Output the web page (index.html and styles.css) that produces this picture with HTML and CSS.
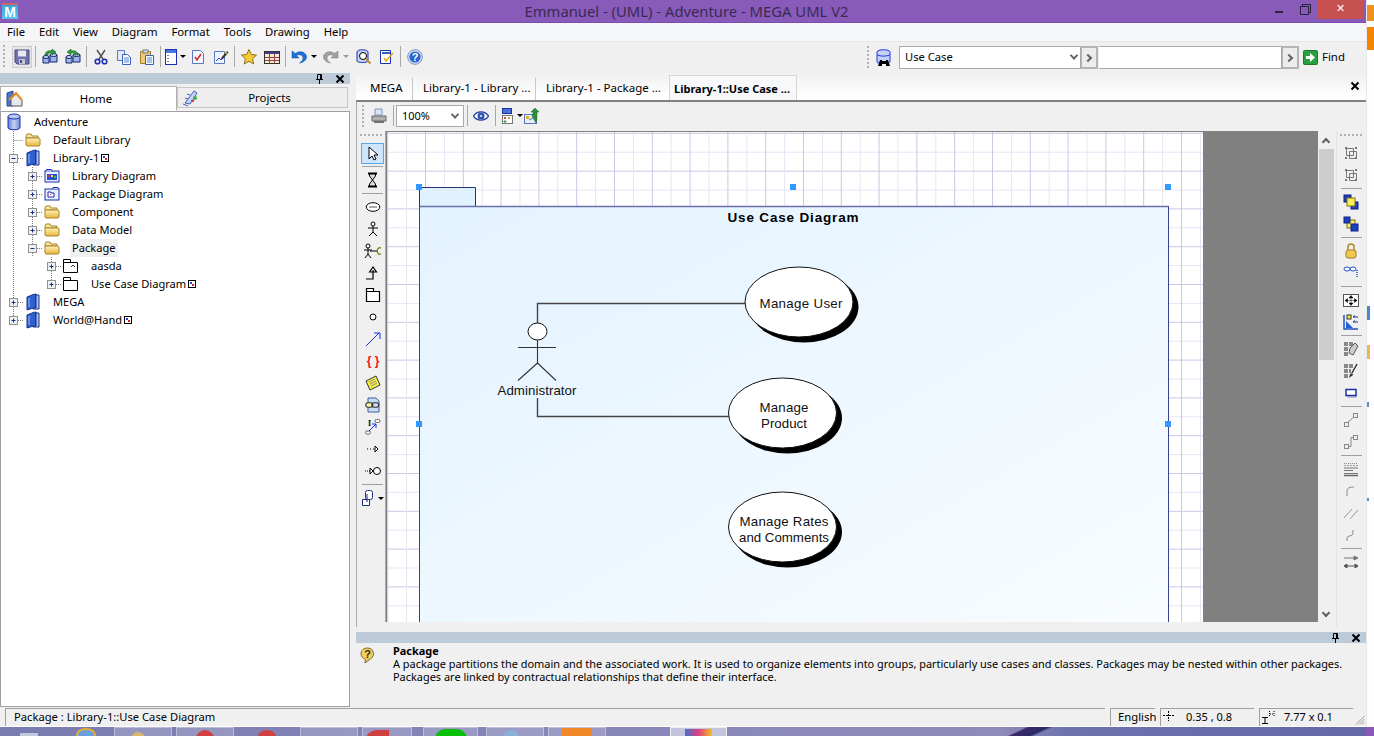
FILE: index.html
```html
<!DOCTYPE html>
<html lang="en">
<head>
<meta charset="utf-8">
<title>Emmanuel - (UML) - Adventure - MEGA UML V2</title>
<link rel="stylesheet" href="styles.css">
</head>
<body>
<svg class="defs" width="0" height="0" aria-hidden="true">
  <defs>
    <linearGradient id="cyl" x1="0" x2="1" y1="0" y2="0"><stop offset="0" stop-color="#5f7fd8"/><stop offset=".5" stop-color="#c4d2f2"/><stop offset="1" stop-color="#6f8cdc"/></linearGradient>
    <linearGradient id="fold" x1="0" x2="0" y1="0" y2="1"><stop offset="0" stop-color="#fff3b8"/><stop offset="1" stop-color="#e8b53c"/></linearGradient>
    <linearGradient id="pkg" x1="0" y1="0" x2="1" y2="1"><stop offset="0" stop-color="#e3f3ff"/><stop offset="1" stop-color="#f8fcff"/></linearGradient>
    <pattern id="grid" x="9.2" y="19.4" width="37.8" height="37.8" patternUnits="userSpaceOnUse">
      <rect x="0" y="0" width="37.8" height="1" fill="#c9c6e6" shape-rendering="crispEdges"/>
      <rect x="0" y="18.9" width="37.8" height="1" fill="#e6e4f5" shape-rendering="crispEdges"/>
      <rect x="0" y="0" width="1" height="37.8" fill="#c9c6e6" shape-rendering="crispEdges"/>
      <rect x="18.9" y="0" width="1" height="37.8" fill="#e6e4f5" shape-rendering="crispEdges"/>
    </pattern>
    <symbol id="db" viewBox="0 0 16 18"><path d="M2 3.500v11c0 3 12 3 12 0v-11z" fill="url(#cyl)" stroke="#1c2fb0"/><ellipse cx="8" cy="3.500" rx="6" ry="2.500" fill="#b7c8f0" stroke="#1c2fb0"/></symbol>
    <symbol id="folder" viewBox="0 0 16 16"><path d="M1 4l1-2h4l1 2h6v2H1z" fill="#f8e9a0" stroke="#a8842c"/><path d="M1 13V6h13l1 1v6l-1 1H2z" fill="url(#fold)" stroke="#a8842c"/></symbol>
    <symbol id="book" viewBox="0 0 16 18"><path d="M2 4c3-1 6-3 9-3v14c-3 0-6 1-9 2z" fill="#2f5fd0" stroke="#15308c"/><path d="M11 2h3v14H8c1-1 2-1 3-1z" fill="#a8c0f0" stroke="#15308c"/><path d="M4 5v9" stroke="#9fc0ff"/></symbol>
    <symbol id="libd" viewBox="0 0 16 16"><rect x="1" y="3" width="14" height="11" fill="#e8f0ff" stroke="#1c2fb0"/><path d="M1.500 3.500l1-2h5l1 2" fill="#b8c8f0" stroke="#1c2fb0"/><rect x="3" y="6" width="10" height="6" fill="#2a50d0"/><rect x="4" y="7" width="2" height="2" fill="#f03030"/><rect x="7" y="7" width="2" height="2" fill="#ffe040"/><rect x="10" y="8" width="2" height="2" fill="#40c040"/></symbol>
    <symbol id="pkgd" viewBox="0 0 16 16"><rect x="1" y="3" width="14" height="11" fill="#e8f0ff" stroke="#1c2fb0"/><path d="M9 3V1.500h5l1 1.500" fill="#b8c8f0" stroke="#1c2fb0"/><path d="M4 6h3v1h3v4H4z" fill="#fff" stroke="#1c2fb0"/><rect x="6" y="8" width="1" height="1" fill="#f03030"/></symbol>
    <symbol id="pkgo" viewBox="0 0 16 16"><path d="M.5 14.500v-10h14v10zM.5 4.500v-3h7v3" fill="#fff" stroke="#000"/></symbol>
    <symbol id="pkga" viewBox="0 0 16 16"><path d="M.5 14.500v-10h14v10zM.5 4.500v-3h7v3" fill="#fff" stroke="#000"/><path d="M8 9l2-2 2 2" fill="none" stroke="#333"/></symbol>
    <symbol id="cnplus" viewBox="0 0 19 18"><path d="M9.500 0v5M14 9.500h5" stroke="#808080" stroke-dasharray="1 1" fill="none"/><rect x="5.500" y="5.500" width="8" height="8" fill="#eef1f6" stroke="#909090"/><path d="M7.500 9.500h4M9.500 7.500v4" stroke="#1c2f80"/></symbol>
    <symbol id="cnplusc" viewBox="0 0 19 18"><path d="M9.500 0v18M14 9.500h5" stroke="#808080" stroke-dasharray="1 1" fill="none"/><rect x="5.500" y="5.500" width="8" height="8" fill="#eef1f6" stroke="#909090"/><path d="M7.500 9.500h4M9.500 7.500v4" stroke="#1c2f80"/></symbol>
    <symbol id="cnminus" viewBox="0 0 19 18"><path d="M9.500 0v18M14 9.500h5" stroke="#808080" stroke-dasharray="1 1" fill="none"/><rect x="5.500" y="5.500" width="8" height="8" fill="#eef1f6" stroke="#909090"/><path d="M7.500 9.500h4" stroke="#1c2f80"/></symbol>
    <symbol id="cnt" viewBox="0 0 19 18"><path d="M9.500 0v18M9.500 9.500H19" stroke="#808080" stroke-dasharray="1 1" fill="none"/></symbol>
    <symbol id="cnv" viewBox="0 0 19 18"><path d="M9.500 0v18" stroke="#808080" stroke-dasharray="1 1" fill="none"/></symbol>
    <symbol id="badge" viewBox="0 0 8 8"><rect x=".5" y=".5" width="7" height="7" fill="#fff" stroke="#000"/><rect x="2" y="2" width="2" height="2" fill="#2040e0"/><rect x="4" y="4" width="2" height="2" fill="#e02020"/></symbol>

    <symbol id="save" viewBox="0 0 16 16"><path d="M1 1h14v14H3l-2-2z" fill="#6f70ac" stroke="#4a4a80"/><rect x="4" y="1.500" width="8" height="6" fill="#e8e8f0"/><rect x="5" y="10" width="6" height="5" fill="#c4c4d8"/><rect x="6" y="11" width="2" height="3" fill="#4a4a80"/></symbol>
    <symbol id="dbdown" viewBox="0 0 16 16"><path d="M1 8h6v6H1zM8 6h7v7H8z" fill="#9db5ea" stroke="#12246c"/><ellipse cx="4" cy="8" rx="3" ry="1.500" fill="#c8d6f6" stroke="#12246c"/><ellipse cx="11.500" cy="6" rx="3.500" ry="1.500" fill="#c8d6f6" stroke="#12246c"/><path d="M3 6c0-3 3-5 7-4V0l4 3-4 3V4C7 3.500 6 4.500 6 6z" fill="#2f9a3c" stroke="#186a22" stroke-width=".6"/></symbol>
    <symbol id="dbup" viewBox="0 0 16 16"><path d="M1 8h6v6H1zM8 6h7v7H8z" fill="#9db5ea" stroke="#12246c"/><ellipse cx="4" cy="8" rx="3" ry="1.500" fill="#c8d6f6" stroke="#12246c"/><ellipse cx="11.500" cy="6" rx="3.500" ry="1.500" fill="#c8d6f6" stroke="#12246c"/><path d="M13 6c0-3-3-5-7-4V0L2 3l4 3V4c3-.5 4 .5 4 2z" fill="#2f9a3c" stroke="#186a22" stroke-width=".6"/></symbol>
    <symbol id="cut" viewBox="0 0 16 16"><path d="M4 1l6 9M12 1L6 10" stroke="#555" stroke-width="1.500"/><circle cx="4.500" cy="12.500" r="2.300" fill="none" stroke="#1c2fb0" stroke-width="1.600"/><circle cx="11.500" cy="12.500" r="2.300" fill="none" stroke="#1c2fb0" stroke-width="1.600"/></symbol>
    <symbol id="copy" viewBox="0 0 16 16"><path d="M1.500 1.500h7v10h-7z" fill="#e4ecfa" stroke="#5a78c0"/><path d="M6.500 5.500h5l3 3v7h-8z" fill="#f4f8ff" stroke="#3c60b8"/><path d="M8 9h5M8 11h5M8 13h5" stroke="#5a8ad8"/></symbol>
    <symbol id="paste" viewBox="0 0 16 16"><path d="M1.500 2.500h10v12h-10z" fill="#eecb78" stroke="#a07c30"/><rect x="4" y="1" width="5" height="3" fill="#ddd" stroke="#777"/><path d="M6.500 6.500h8v9h-8z" fill="#f4f8ff" stroke="#3c60b8"/><path d="M8 9h5M8 11h5M8 13h5" stroke="#5a8ad8"/></symbol>
    <symbol id="form" viewBox="0 0 16 16"><rect x="2.500" y=".5" width="11" height="15" fill="#fff" stroke="#1c2fb0"/><rect x="3" y="1" width="10" height="3" fill="#4a78d8"/><path d="M5 6v1M5 9v1M5 12v1" stroke="#000"/></symbol>
    <symbol id="check" viewBox="0 0 16 16"><path d="M2.500 1.500h8l3 3v10h-11z" fill="#f2f6ff" stroke="#5a78c0"/><path d="M5 8l2 3 4-6" fill="none" stroke="#e02020" stroke-width="1.500"/></symbol>
    <symbol id="pen" viewBox="0 0 16 16"><path d="M1.500 2.500h10v12h-10z" fill="#eef3ff" stroke="#5a78c0"/><path d="M3 12l3-3 2 2 3-4" fill="none" stroke="#2040d0"/><path d="M8 9l6-7 1.500 1.500-6 7z" fill="#333"/><path d="M12 3l2 2" stroke="#e8c020" stroke-width="1.500"/></symbol>
    <symbol id="star" viewBox="0 0 16 16"><path d="M8 .5l2.300 5 5.200.6-3.900 3.600 1.100 5.300L8 12.300 3.300 15l1.100-5.300L.5 6.100l5.200-.6z" fill="#f8cc30" stroke="#8c7020"/></symbol>
    <symbol id="cal" viewBox="0 0 16 16"><rect x=".5" y="2.500" width="15" height="12" fill="#f4edc8" stroke="#333"/><rect x="1" y="3" width="14" height="2" fill="#4a3a90"/><path d="M5.500 5v9M10.500 5v9M1 8.500h14M1 11.500h14" stroke="#9c3c50"/></symbol>
    <symbol id="undo" viewBox="0 0 16 16"><path d="M1 2v7h7L5.500 6.500C8 5 12 6 12 9c0 2-1.500 3.500-3.500 5 4-.5 7-3 7-6 0-5-7-7-11-3.500z" fill="#1c70d8" stroke="#104a9c" stroke-width=".5"/></symbol>
    <symbol id="redo" viewBox="0 0 16 16"><path d="M15 2v7H8l2.500-2.500C8 5 4 6 4 9c0 2 1.500 3.500 3.500 5-4-.5-7-3-7-6 0-5 7-7 11-3.500z" fill="#a0a0a0" stroke="#7c7c7c" stroke-width=".5"/></symbol>
    <symbol id="find" viewBox="0 0 16 16"><path d="M1 3c0-3 11-3 11 0v9c0 2-11 2-11 0z" fill="#c4d4f6" stroke="#1c2fb0"/><circle cx="7" cy="7" r="3.500" fill="#fff" stroke="#000"/><path d="M10 10l4.500 4.500" stroke="#c09020" stroke-width="2"/></symbol>
    <symbol id="doc" viewBox="0 0 16 16"><path d="M1.500 1.500h10v13h-10z" fill="#fff" stroke="#1c2fb0"/><rect x="3" y="3" width="8" height="2" fill="#3060d0"/><path d="M5 9l2 3 7-8" fill="none" stroke="#e8a820" stroke-width="1.600"/></symbol>
    <symbol id="help" viewBox="0 0 16 16"><circle cx="8" cy="8" r="7.300" fill="#d6e2f6" stroke="#7c90b8"/><circle cx="8" cy="8" r="5.600" fill="#2a62d0"/><text x="8" y="11.500" text-anchor="middle" class="svgq">?</text></symbol>
    <symbol id="binoc" viewBox="0 0 16 18"><path d="M1 3c0-3 13-3 13 0v10c0 2-13 2-13 0z" fill="#c4d2f8" stroke="#2030e0"/><path d="M1.500 6c3 1.500 9 1.500 12 0" fill="none" stroke="#2030e0"/><path d="M4 11h2v1h4v-1h2l2 6h-4v-2H6v2H2z" fill="#000"/></symbol>
    <symbol id="go" viewBox="0 0 15 15"><rect x=".5" y=".5" width="14" height="14" rx="1" fill="#2aa040" stroke="#1a7a2a"/><path d="M3 6h4V3l5 4.500L7 12V9H3z" fill="#fff"/></symbol>
    <symbol id="pin" viewBox="0 0 9 10"><path d="M2.500 .5h4v5h-4zM1 5.500h7M4.500 6v4M5.500 1v4" stroke="#000" fill="none"/></symbol>
    <symbol id="close" viewBox="0 0 10 10"><path d="M1.500 1.500l7 7M8.500 1.500l-7 7" stroke="#000" stroke-width="2"/></symbol>
    <symbol id="home" viewBox="0 0 18 18"><path d="M1 3l6-2v15H1z" fill="#4a78c8" stroke="#2a4890"/><path d="M5 16V9l5-5 6 6v6z" fill="#e8e8f0" stroke="#555"/><path d="M3 10l7-7 6 7" fill="none" stroke="#e88c20" stroke-width="2"/></symbol>
    <symbol id="proj" viewBox="0 0 18 18"><path d="M3 14L12 2l3 2-7 11z" fill="#c8d4f4" stroke="#3c60c0"/><path d="M1 15l5 2M3 9l3 1M5 5l3 1" stroke="#3c60c0"/><circle cx="13" cy="9" r="2" fill="#40b040"/><rect x="9" y="11" width="3" height="2" fill="#e04040"/></symbol>
    <symbol id="print" viewBox="0 0 16 16"><path d="M4 1h7v6H4z" fill="#d6e4f6" stroke="#8098b8"/><path d="M1 8h14v5H1z" fill="#b0b0b0" stroke="#666"/><path d="M3 13h10v2H3z" fill="#707070"/></symbol>
    <symbol id="eye" viewBox="0 0 16 12"><path d="M.5 6C4 .5 12 .5 15.500 6 12 11.500 4 11.500 .5 6z" fill="#fff" stroke="#1c3ca0" stroke-width="1.300"/><circle cx="8" cy="6" r="3.500" fill="#2a50a8"/><circle cx="8" cy="6" r="1.300" fill="#b8ccf0"/></symbol>
    <symbol id="layout" viewBox="0 0 16 16"><rect x="1.500" y=".5" width="9" height="5" fill="#4a70d8" stroke="#1c2fb0"/><rect x="1.500" y="7.500" width="10" height="8" fill="#fff" stroke="#777"/><rect x="3" y="9" width="2" height="2" fill="#e04040"/><rect x="7" y="9" width="2" height="2" fill="#e8a020"/><path d="M4 12v3M2.500 13.500h3" stroke="#20a040"/></symbol>
    <symbol id="export" viewBox="0 0 16 16"><rect x=".5" y="6.500" width="12" height="9" fill="#e8f0fa" stroke="#5a78c0"/><rect x="2" y="8" width="3" height="3" fill="#e8b020"/><path d="M5 12l4-2" stroke="#5a78c0"/><path d="M8 8c1-2 1-3 1-4H7l4-4 4 4h-2c0 4 0 8-1 11z" fill="#2a9040" stroke="#186a22" stroke-width=".5"/></symbol>

    <symbol id="t-arrow" viewBox="0 0 16 16"><path d="M4 1v12l3-3 2 4 2-1-2-4h4z" fill="#fff" stroke="#000"/></symbol>
    <symbol id="t-hour" viewBox="0 0 16 16"><path d="M3 1.500h9M3 14.500h9" stroke="#000" stroke-width="2"/><path d="M4.500 2v2l3 4-3 4v2h6v-2l-3-4 3-4V2z" fill="#ddd" stroke="#000"/></symbol>
    <symbol id="t-ell" viewBox="0 0 16 16"><ellipse cx="8" cy="8" rx="6.800" ry="4.300" fill="#fff" stroke="#000"/><path d="M4 8h8" stroke="#555"/></symbol>
    <symbol id="t-act" viewBox="0 0 16 16"><circle cx="8" cy="3" r="2" fill="#fff" stroke="#000"/><path d="M8 5v6M3 7h10M8 11l-4 4M8 11l4 4" stroke="#000" fill="none"/></symbol>
    <symbol id="t-actuc" viewBox="0 0 18 16"><circle cx="4" cy="3" r="2" fill="#fff" stroke="#000"/><path d="M4 5v6M0 7h8M4 11l-3 4M4 11l3 4M6 8h7" stroke="#000" fill="none"/><path d="M17 5c-5-2-5 8 0 6" fill="none" stroke="#808000" stroke-width="1.300"/></symbol>
    <symbol id="t-up" viewBox="0 0 16 16"><path d="M1 14h7V5M4.500 7L8 2l3.500 5z" fill="none" stroke="#000" stroke-width="1.200"/></symbol>
    <symbol id="t-pkg" viewBox="0 0 16 16"><path d="M1.500 14.500v-10h13v10zM1.500 4.500v-3h7v3" fill="#fff" stroke="#000" stroke-width="1.200"/></symbol>
    <symbol id="t-circ" viewBox="0 0 16 16"><circle cx="8" cy="8" r="3" fill="#fff" stroke="#000"/></symbol>
    <symbol id="t-line" viewBox="0 0 16 16"><path d="M1 15L14 2" stroke="#1c2fe0"/><path d="M9 2h6v6" fill="none" stroke="#1c2fe0"/></symbol>
    <symbol id="t-brace" viewBox="0 0 16 16"><text x="8" y="12" text-anchor="middle" class="svgb">{ }</text></symbol>
    <symbol id="t-note" viewBox="0 0 16 16"><path d="M1 6l10-5 4 9-10 5z" fill="#f8f040" stroke="#333"/><path d="M4 7l6-3M5 9l6-3M6 11l6-3" stroke="#888"/></symbol>
    <symbol id="t-link" viewBox="0 0 16 16"><path d="M3 1h8l3 3v11H3z" fill="#c8daf4" stroke="#3c60a0"/><rect x=".8" y="5.800" width="7" height="4.500" rx="2.200" fill="#fff8a0" stroke="#333" stroke-width="1.100"/><rect x="6.800" y="5.800" width="7" height="4.500" rx="2.200" fill="none" stroke="#333" stroke-width="1.100"/></symbol>
    <symbol id="t-text" viewBox="0 0 16 16"><text x="3" y="7" class="svgs">I</text><rect x="10" y=".5" width="5" height="3" rx="1.500" fill="#fff" stroke="#666"/><rect x=".5" y="12" width="5" height="3" rx="1.500" fill="#fff" stroke="#666"/><path d="M4 12l7-7M7 5h4v4" fill="none" stroke="#1c2fe0"/></symbol>
    <symbol id="t-dep" viewBox="0 0 16 16"><path d="M2 8h7" stroke="#000" stroke-dasharray="1 2"/><path d="M10 5v6l3-3z" fill="#fff" stroke="#000"/></symbol>
    <symbol id="t-real" viewBox="0 0 18 16"><path d="M1 8h5" stroke="#000" stroke-dasharray="1 1"/><path d="M6 5v6l3-3z" fill="#fff" stroke="#000"/><circle cx="13" cy="8" r="3.500" fill="#fff" stroke="#000"/></symbol>
    <symbol id="t-comp" viewBox="0 0 16 16"><rect x="4.500" y=".5" width="7" height="9" rx="2" fill="#fff" stroke="#1c2f80"/><path d="M1.500 9.500h7v6h-7z" fill="#fff" stroke="#1c2f80"/><path d="M6 4v8" stroke="#1c2f80"/></symbol>

    <symbol id="r-group" viewBox="0 0 16 16"><path d="M3.500 3.500h7v7h-7zM6.500 6.500h7v7h-7z" fill="none" stroke="#777"/><path d="M2 2h2v2H2zM12 2h2v2h-2zM2 12h2v2H2zM12 12h2v2h-2z" fill="#777"/></symbol>
    <symbol id="r-front" viewBox="0 0 16 16"><rect x="1" y="1" width="7" height="7" fill="#1c40c0" stroke="#102080"/><rect x="8" y="8" width="7" height="7" fill="#1c40c0" stroke="#102080"/><rect x="4" y="4" width="8" height="8" fill="#f8f060" stroke="#807000"/></symbol>
    <symbol id="r-back" viewBox="0 0 16 16"><rect x="4" y="4" width="8" height="8" fill="#f8f060" stroke="#807000"/><rect x="1" y="1" width="6" height="6" fill="#1c40c0" stroke="#102080"/><rect x="8" y="8" width="7" height="7" fill="#1c40c0" stroke="#102080"/></symbol>
    <symbol id="r-lock" viewBox="0 0 16 16"><path d="M5 7V4c0-4 6-4 6 0v3" fill="none" stroke="#b08820" stroke-width="1.500"/><rect x="3" y="7" width="10" height="8" rx="2" fill="#f0c850" stroke="#a07c20"/></symbol>
    <symbol id="r-key" viewBox="0 0 16 16"><ellipse cx="4" cy="4" rx="3" ry="2" fill="#fff" stroke="#1c50c0"/><ellipse cx="10" cy="4" rx="3" ry="2" fill="#fff" stroke="#1c50c0"/><path d="M14 5v8" stroke="#1c50c0" stroke-width="1.500" stroke-dasharray="1 1"/></symbol>
    <symbol id="r-move" viewBox="0 0 16 16"><rect x=".5" y="2.500" width="15" height="12" fill="#fff" stroke="#555"/><path d="M8 3.500l2 2.500H6zM8 13.500L6 11h4zM2 8.500L4.500 6.500v4zM14 8.500l-2.500-2v4zM4 8.500h8M8 5v7" fill="#000" stroke="#000" stroke-width=".5"/></symbol>
    <symbol id="r-align" viewBox="0 0 16 16"><path d="M1 1v14h14" fill="none" stroke="#1c50c0" stroke-width="1.500"/><rect x="4" y="1" width="4" height="4" fill="#f8e840" stroke="#333"/><path d="M3 14V7l7 7z" fill="#1c60e0"/><path d="M15 3H10l2-1.500M15 8h-5l2-1.500" stroke="#103080" fill="none"/></symbol>
    <symbol id="r-fill" viewBox="0 0 16 16"><path d="M1 1h4v4H1zM6 1h4v4H6zM1 6h4v4H1zM1 11h4v4H1z" fill="#888"/><path d="M7 7l5-5 3 3-5 9-4-2z" fill="#ccc" stroke="#555"/></symbol>
    <symbol id="r-brush" viewBox="0 0 16 16"><path d="M1 1h4v4H1zM6 1h4v4H6zM1 6h4v4H1zM6 6h2v4H6zM1 11h4v4H1z" fill="#888"/><path d="M14 1L9 10" stroke="#333" stroke-width="1.500"/><path d="M7 11c2-1 3 0 3 1l-4 3z" fill="#333"/></symbol>
    <symbol id="r-rect" viewBox="0 0 16 16"><rect x="3" y="4.500" width="10" height="6" fill="#fff" stroke="#1c2fa0" stroke-width="1.500"/><path d="M4 12h10" stroke="#1c2fa0" stroke-opacity=".5"/></symbol>
    <symbol id="r-l1" viewBox="0 0 16 16"><rect x="1.500" y="10.500" width="4" height="4" fill="#eee" stroke="#888"/><rect x="10.500" y="1.500" width="4" height="4" fill="#eee" stroke="#888"/><path d="M5 10l6-5" stroke="#888"/></symbol>
    <symbol id="r-l2" viewBox="0 0 16 16"><rect x="1.500" y="10.500" width="4" height="4" fill="#eee" stroke="#888"/><rect x="10.500" y="1.500" width="4" height="4" fill="#eee" stroke="#888"/><path d="M5.500 12.500H8v-9h2.500" fill="none" stroke="#888"/></symbol>
    <symbol id="r-lines" viewBox="0 0 16 16"><path d="M1 2.500h14" stroke="#888" stroke-dasharray="1 1"/><path d="M1 4.500h14" stroke="#999" stroke-dasharray="2 1"/><path d="M1 7h14M1 9.500h9M1 12.500h14" stroke="#777"/><path d="M1 14.500h14" stroke="#666" stroke-width="1.500"/></symbol>
    <symbol id="r-curve" viewBox="0 0 16 16"><path d="M4 13V8c0-3 3-4 7-4" fill="none" stroke="#888"/></symbol>
    <symbol id="r-dbl" viewBox="0 0 16 16"><path d="M1 13L9 4M7 14l8-9" stroke="#999"/></symbol>
    <symbol id="r-s" viewBox="0 0 16 16"><path d="M4 14v-3c0-3 6-1 6-5V3" fill="none" stroke="#888"/></symbol>
    <symbol id="r-swap" viewBox="0 0 16 16"><path d="M1 4h13M11 2l4 2-4 2z" stroke="#777" fill="#777"/><path d="M1 12h14M4 10l-3 2 3 2zM12 10l3 2-3 2z" stroke="#555" fill="#555"/></symbol>
    <symbol id="q" viewBox="0 0 15 17"><path d="M7.500 1c3.500 0 6 2.500 6 5.500S11 12 9 13l-4 3 .5-3.500C3 11.500 1 9.500 1 6.500S4 1 7.500 1z" fill="#f2cf60" stroke="#7c6428"/><text x="7.500" y="10.500" text-anchor="middle" class="svgq dark">?</text></symbol>
  </defs>
</svg>

<div class="screen">
  <div class="upper">
    <div class="window">
      <header class="titlebar">
        <span class="appicon">M</span>
        <span class="title">Emmanuel - (UML) - Adventure - MEGA UML V2</span>
        <div class="winbtns">
          <span class="wmin"></span>
          <span class="wmax"></span>
          <span class="wclose">✕</span>
        </div>
      </header>
      <nav class="menubar">
        <span>File</span><span>Edit</span><span>View</span><span>Diagram</span><span>Format</span><span>Tools</span><span>Drawing</span><span>Help</span>
      </nav>
      <div class="toolbar">
        <i class="grip"></i>
        <div class="btn boxed"><svg class="ic"><use href="#save"/></svg></div><i class="sep"></i>
        <div class="btn"><svg class="ic"><use href="#dbdown"/></svg></div><div class="btn"><svg class="ic"><use href="#dbup"/></svg></div><i class="sep"></i>
        <div class="btn"><svg class="ic"><use href="#cut"/></svg></div><div class="btn"><svg class="ic"><use href="#copy"/></svg></div><div class="btn"><svg class="ic"><use href="#paste"/></svg></div><i class="sep"></i>
        <div class="btn"><svg class="ic"><use href="#form"/></svg><b class="drop"></b></div><div class="btn"><svg class="ic"><use href="#check"/></svg></div><div class="btn"><svg class="ic"><use href="#pen"/></svg></div><i class="sep"></i>
        <div class="btn"><svg class="ic"><use href="#star"/></svg></div><div class="btn"><svg class="ic"><use href="#cal"/></svg></div><i class="sep"></i>
        <div class="btn wide"><svg class="ic"><use href="#undo"/></svg><b class="drop"></b></div><div class="btn wide"><svg class="ic"><use href="#redo"/></svg><b class="drop off"></b></div>
        <div class="btn"><svg class="ic"><use href="#find"/></svg></div><div class="btn"><svg class="ic"><use href="#doc"/></svg></div><i class="sep"></i>
        <div class="btn"><svg class="ic"><use href="#help"/></svg></div>
        <div class="findbar">
          <i class="grip"></i>
          <svg class="ic binoc"><use href="#binoc"/></svg>
          <div class="combo"><span class="combotext">Use Case</span><b class="chev"></b></div><div class="arrowbtn"><b class="chevr"></b></div>
          <div class="input"></div><div class="arrowbtn"><b class="chevr"></b></div>
          <svg class="ic go"><use href="#go"/></svg><span class="findtext">Find</span>
        </div>
      </div>

      <div class="workspace">
        <aside class="leftpanel">
          <div class="panelhead"><svg class="pin"><use href="#pin"/></svg><svg class="x"><use href="#close"/></svg></div>
          <div class="sidetabs">
            <div class="sidetab active"><svg class="tabic"><use href="#home"/></svg><span>Home</span></div>
            <div class="sidetab"><svg class="tabic"><use href="#proj"/></svg><span>Projects</span></div>
          </div>
          <div class="tree">
            <div class="row"><svg class="ti"><use href="#db"/></svg><span>Adventure</span></div>
            <div class="row"><svg class="cn"><use href="#cnt"/></svg><svg class="ti"><use href="#folder"/></svg><span>Default Library</span></div>
            <div class="row"><svg class="cn"><use href="#cnminus"/></svg><svg class="ti"><use href="#book"/></svg><span>Library-1</span><svg class="bd"><use href="#badge"/></svg></div>
            <div class="row"><svg class="cn"><use href="#cnv"/></svg><svg class="cn"><use href="#cnplusc"/></svg><svg class="ti"><use href="#libd"/></svg><span>Library Diagram</span></div>
            <div class="row"><svg class="cn"><use href="#cnv"/></svg><svg class="cn"><use href="#cnplusc"/></svg><svg class="ti"><use href="#pkgd"/></svg><span>Package Diagram</span></div>
            <div class="row"><svg class="cn"><use href="#cnv"/></svg><svg class="cn"><use href="#cnplusc"/></svg><svg class="ti"><use href="#folder"/></svg><span>Component</span></div>
            <div class="row"><svg class="cn"><use href="#cnv"/></svg><svg class="cn"><use href="#cnplusc"/></svg><svg class="ti"><use href="#folder"/></svg><span>Data Model</span></div>
            <div class="row"><svg class="cn"><use href="#cnv"/></svg><svg class="cn"><use href="#cnminus"/></svg><svg class="ti"><use href="#folder"/></svg><span class="sel">Package</span></div>
            <div class="row"><svg class="cn"><use href="#cnv"/></svg><i class="cn"></i><svg class="cn"><use href="#cnplusc"/></svg><svg class="ti"><use href="#pkga"/></svg><span>aasda</span></div>
            <div class="row"><svg class="cn"><use href="#cnv"/></svg><i class="cn"></i><svg class="cn"><use href="#cnplus"/></svg><svg class="ti"><use href="#pkgo"/></svg><span>Use Case Diagram</span><svg class="bd"><use href="#badge"/></svg></div>
            <div class="row"><svg class="cn"><use href="#cnplusc"/></svg><svg class="ti"><use href="#book"/></svg><span>MEGA</span></div>
            <div class="row"><svg class="cn"><use href="#cnplus"/></svg><svg class="ti"><use href="#book"/></svg><span>World@Hand</span><svg class="bd"><use href="#badge"/></svg></div>
          </div>
        </aside>

        <section class="center">
          <div class="doctabs">
            <span class="doctab t1">MEGA</span><span class="doctab t2">Library-1 - Library ...</span><span class="doctab t3">Library-1 - Package ...</span><span class="doctab active">Library-1::Use Case ...</span>
            <svg class="x docx"><use href="#close"/></svg>
          </div>
          <div class="docframe">
            <div class="doctools">
              <i class="grip"></i>
              <svg class="ic printic"><use href="#print"/></svg><i class="sep2"></i>
              <div class="zoomcombo"><span>100%</span><b class="chev"></b></div><i class="sep2"></i>
              <svg class="ic eyeic"><use href="#eye"/></svg><i class="sep2"></i>
              <svg class="ic layic"><use href="#layout"/></svg><b class="drop"></b>
              <svg class="ic expic"><use href="#export"/></svg>
            </div>
            <div class="docbody">
              <div class="vtools left">
                <i class="hgrip"></i>
                <div class="vb selected"><svg class="ic"><use href="#t-arrow"/></svg></div><i class="vsep"></i>
                <div class="vb"><svg class="ic"><use href="#t-hour"/></svg></div><i class="vsep"></i>
                <div class="vb"><svg class="ic"><use href="#t-ell"/></svg></div>
                <div class="vb"><svg class="ic"><use href="#t-act"/></svg></div>
                <div class="vb"><svg class="ic wide18"><use href="#t-actuc"/></svg></div>
                <div class="vb"><svg class="ic"><use href="#t-up"/></svg></div>
                <div class="vb"><svg class="ic"><use href="#t-pkg"/></svg></div>
                <div class="vb"><svg class="ic"><use href="#t-circ"/></svg></div>
                <div class="vb"><svg class="ic"><use href="#t-line"/></svg></div>
                <div class="vb"><svg class="ic"><use href="#t-brace"/></svg></div>
                <div class="vb"><svg class="ic"><use href="#t-note"/></svg></div>
                <div class="vb"><svg class="ic"><use href="#t-link"/></svg></div>
                <div class="vb"><svg class="ic"><use href="#t-text"/></svg></div>
                <div class="vb"><svg class="ic"><use href="#t-dep"/></svg></div>
                <div class="vb"><svg class="ic wide18"><use href="#t-real"/></svg></div><i class="vsep"></i>
                <div class="vb"><svg class="ic"><use href="#t-comp"/></svg><b class="drop"></b></div>
              </div>

              <div class="canvas">
                <svg class="diagram" width="931" height="490" viewBox="387 132 931 490">
                  <rect x="387" y="132" width="816" height="490" fill="#fff"/>
                  <rect x="387" y="132" width="816" height="490" fill="url(#grid)"/>
                  <rect x="1203" y="132" width="115" height="490" fill="#808080"/>
                  <path d="M419.500 206.500V187.500H475.500V206.500" fill="#e0f2ff" stroke="#26307c"/>
                  <rect x="419.500" y="206.500" width="749" height="430" fill="url(#pkg)" stroke="#3a4090"/>
                  <path d="M420 206.500H1168" stroke="#6a70a8" stroke-width="1.600"/>
                  <text x="793" y="222" text-anchor="middle" class="dtitle" textLength="131">Use Case Diagram</text>

                  <path d="M537.500 323V303.500H746M537.500 398V416.500H729" fill="none" stroke="#444" stroke-width="1.400"/>
                  <ellipse cx="537.500" cy="331.500" rx="9.500" ry="8.500" fill="#fff" stroke="#111"/>
                  <path d="M537.500 340V364M518 347.500H556M537.500 363L518 380.500M537.500 363L556 380.500" fill="none" stroke="#333" stroke-width="1.100"/>
                  <text x="537" y="395" text-anchor="middle" class="dlabel" textLength="79">Administrator</text>

                  <ellipse cx="804" cy="307" rx="54.500" ry="35.500" fill="#000"/>
                  <ellipse cx="799" cy="302" rx="54" ry="35" fill="#fff" stroke="#111"/>
                  <text x="801" y="308" text-anchor="middle" class="dlabel" textLength="83">Manage User</text>

                  <ellipse cx="787.500" cy="418" rx="54.500" ry="35.500" fill="#000"/>
                  <ellipse cx="782.500" cy="413" rx="54" ry="35" fill="#fff" stroke="#111"/>
                  <text x="784" y="412" text-anchor="middle" class="dlabel" textLength="49">Manage</text>
                  <text x="784" y="428" text-anchor="middle" class="dlabel" textLength="46">Product</text>

                  <ellipse cx="787.500" cy="532" rx="54.500" ry="35.500" fill="#000"/>
                  <ellipse cx="782.500" cy="527" rx="54" ry="35" fill="#fff" stroke="#111"/>
                  <text x="784" y="526" text-anchor="middle" class="dlabel" textLength="89">Manage Rates</text>
                  <text x="784" y="542" text-anchor="middle" class="dlabel" textLength="90">and Comments</text>

                  <g fill="#3399ff">
                    <rect x="416" y="184" width="6" height="6"/><rect x="790" y="184" width="6" height="6"/><rect x="1165" y="184" width="6" height="6"/>
                    <rect x="416" y="421" width="6" height="6"/><rect x="1165" y="421" width="6" height="6"/>
                  </g>
                </svg>
              </div>

              <div class="vscroll">
                <b class="chevu"></b>
                <div class="thumb"></div>
                <b class="chevd"></b>
              </div>

              <div class="vtools right">
                <i class="hgrip"></i>
                <div class="vb"><svg class="ic"><use href="#r-group"/></svg></div>
                <div class="vb"><svg class="ic"><use href="#r-group"/></svg></div><i class="vsep"></i>
                <div class="vb"><svg class="ic"><use href="#r-front"/></svg></div>
                <div class="vb"><svg class="ic"><use href="#r-back"/></svg></div><i class="vsep"></i>
                <div class="vb"><svg class="ic"><use href="#r-lock"/></svg></div>
                <div class="vb"><svg class="ic"><use href="#r-key"/></svg></div><i class="vsep"></i>
                <div class="vb"><svg class="ic"><use href="#r-move"/></svg></div>
                <div class="vb"><svg class="ic"><use href="#r-align"/></svg></div><i class="vsep"></i>
                <div class="vb"><svg class="ic"><use href="#r-fill"/></svg></div>
                <div class="vb"><svg class="ic"><use href="#r-brush"/></svg></div>
                <div class="vb"><svg class="ic"><use href="#r-rect"/></svg></div><i class="vsep"></i>
                <div class="vb"><svg class="ic"><use href="#r-l1"/></svg></div>
                <div class="vb"><svg class="ic"><use href="#r-l2"/></svg></div><i class="vsep"></i>
                <div class="vb"><svg class="ic"><use href="#r-lines"/></svg></div>
                <div class="vb"><svg class="ic"><use href="#r-curve"/></svg></div>
                <div class="vb"><svg class="ic"><use href="#r-dbl"/></svg></div>
                <div class="vb"><svg class="ic"><use href="#r-s"/></svg></div><i class="vsep"></i>
                <div class="vb"><svg class="ic"><use href="#r-swap"/></svg></div>
              </div>
            </div>
          </div>
          <div class="info">
            <div class="panelhead"><svg class="pin"><use href="#pin"/></svg><svg class="x"><use href="#close"/></svg></div>
            <div class="infobody">
              <svg class="qic"><use href="#q"/></svg>
              <div class="infotext">
                <strong>Package</strong>
                <p>A package partitions the domain and the associated work. It is used to organize elements into groups, particularly use cases and classes. Packages may be nested within other packages.</p>
                <p>Packages are linked by contractual relationships that define their interface.</p>
              </div>
            </div>
          </div>
        </section>
      </div>

      <footer class="statusbar">
        <div class="st main">Package : Library-1::Use Case Diagram</div>
        <div class="st lang">English</div>
        <div class="st pos"><svg class="sti" viewBox="0 0 14 14"><path d="M0 5.500h11M5.500 1v10" stroke="#000" stroke-dasharray="2 1"/></svg><span>0.35 , 0.8</span></div>
        <div class="st size"><svg class="sti" viewBox="0 0 14 14"><path d="M1 7.500h6M1 13.500h6M4 8v5" stroke="#000"/><path d="M8.500 1v6M13 1v6M9 4h4" stroke="#000" stroke-dasharray="1 1"/></svg><span>7.77 x 0.1</span></div>
        <svg class="resize" viewBox="0 0 10 10"><path d="M9.500 1L1 9.500M9.500 4L4 9.500M9.500 7L7 9.500" stroke="#999"/></svg>
      </footer>
    </div>
    <div class="peek">
      <i class="pk or1"></i><i class="pk or2"></i><i class="pk bl1"></i><i class="pk or3"></i><i class="pk bl2"></i><i class="pk bl3"></i>
    </div>
  </div>
  <div class="taskbar">
    <i class="trayspot startorb"></i><i class="trayspot ie"></i><i class="trayspot redfree"></i><i class="trayspot streak"></i><i class="trayspot purpleend"></i>
    <i class="task tb1"><b class="dot yellow"></b></i><i class="task tb2"><b class="dot red"></b></i>
    <i class="task tb3"></i><i class="task tb4"><b class="dot red wideish"></b></i>
    <i class="task tb5"><b class="dot green"></b></i><i class="task tb6"><b class="dot blue"></b></i><i class="task tb7"><b class="dot orange"></b></i>
    <i class="task tb8 on"><b class="dot multi"></b></i>
  </div>
</div>
</body>
</html>
```

FILE: styles.css
```css
* { box-sizing: border-box; }
html, body { margin: 0; padding: 0; width: 1374px; height: 736px; overflow: hidden; background: #fff; }
body { font: 11.4px/1.2 "Noto Sans", "Open Sans", "Liberation Sans", sans-serif; color: #000; }
.defs { position: absolute; }
i, b { display: block; }
svg { display: block; flex: none; }
.svgq { font: bold 11px "Liberation Sans", sans-serif; fill: #fff; }
.svgq.dark { fill: #3a2c10; }
.svgb { font: bold 12px "Liberation Sans", sans-serif; fill: #f01010; }
.svgs { font: bold 8px "Liberation Serif", serif; fill: #000; }

.screen { display: flex; flex-direction: column; width: 1374px; height: 736px; }
.upper { display: flex; height: 727px; flex: none; }
.window { width: 1366px; flex: none; display: flex; flex-direction: column; background: #f0f0f0; }

/* title bar */
.titlebar { height: 23px; flex: none; display: flex; align-items: flex-start; background: #885aba; border-bottom: 1px solid #7a4fa9; padding-left: 2px; }
.appicon { width: 16px; height: 16px; margin-top: 3px; background: linear-gradient(#39a6dc, #5cc4ee); color: #fff; font: bold 14px/14px "Liberation Sans", sans-serif; text-align: center; border-top: 2px solid #c66; }
.title { flex: 1; text-align: center; font: 14.800px/22px "Noto Sans", sans-serif; color: #3a2a52; padding-left: 80px; }
.winbtns { display: flex; align-items: flex-start; margin-right: 3px; }
.wmin { width: 8px; height: 2px; margin: 11px 17px 0 0; background: #2c2340; }
.wmax { width: 9px; height: 9px; margin: 6px 9px 0 0; border: 1px solid #2c2340; box-shadow: 2px -2px 0 -1px #885aba, 2px -2px 0 0 #2c2340; }
.wclose { width: 45px; height: 19px; background: #c75050; color: #fff; font: bold 11px/18px "DejaVu Sans", sans-serif; text-align: center; }

/* menu */
.menubar { height: 18px; flex: none; display: flex; background: #f5f6f7; padding-left: 7px; gap: 13.900px; line-height: 18px; font-size: 11.300px; }

/* toolbar */
.toolbar { height: 32px; flex: none; display: flex; align-items: center; padding: 0 0 2px 10px; position: relative; background: #f0f0f0; border-top: 1px solid #e6e6e6; }
.toolbar > .grip { position: absolute; left: 3px; top: 3px; }
.grip { width: 2px; height: 24px; background: repeating-linear-gradient(#b0b0b0 0 2px, transparent 2px 4px); }
.btn { width: 23px; height: 22px; display: flex; align-items: center; justify-content: center; flex: none; }
.btn.wide { width: 32px; gap: 3px; }
.btn.boxed { background: #e6e6e6; box-shadow: inset 0 0 0 1px #ccc; width: 20px; margin: 0 1.500px; }
.btn .drop { margin-left: 1px; }
.ic { width: 16px; height: 16px; }
.sep { width: 1px; height: 21px; background: #a8a8a8; margin: 0 2px; flex: none; }
.drop { width: 0; height: 0; flex: none; border: 3px solid transparent; border-top: 3px solid #000; border-bottom: 0; }
.drop.off { border-top-color: #999; }

.findbar { position: absolute; left: 858px; top: 0; height: 31px; display: flex; align-items: center; }
.findbar .grip { margin: 0 7px 0 9px; }
.binoc { width: 16px; height: 18px; margin-right: 7px; }
.combo { width: 182px; height: 23px; background: #fff; border: 1px solid #a9a9a9; display: flex; align-items: center; justify-content: space-between; padding: 0 3px 1px 5px; }
.input { width: 183px; height: 23px; background: #fff; border: 1px solid #a9a9a9; border-left: 0; margin-left: 1px; }
.arrowbtn { width: 17px; height: 23px; background: #ececec; border: 2px solid #b4b4b4; border-left-width: 1px; display: flex; align-items: center; justify-content: center; }
.chev { width: 6px; height: 6px; border-right: 2px solid #666; border-bottom: 2px solid #666; transform: rotate(45deg) translate(-1px, -1px); }
.chevr { width: 6px; height: 6px; border-right: 2px solid #666; border-top: 2px solid #666; transform: rotate(45deg); margin-right: 2px; }
.go { width: 15px; height: 15px; margin: 0 4px; }
.findtext { font-size: 11.400px; padding-bottom: 1px; }
.combotext { font-size: 11.200px; }

/* workspace */
.workspace { flex: 1; display: flex; min-height: 0; gap: 6px; }
.leftpanel { width: 350px; flex: none; display: flex; flex-direction: column; }
.panelhead { height: 11px; flex: none; background: #bdcbd9; display: flex; justify-content: flex-end; align-items: center; padding-right: 5px; gap: 11px; }
.pin { width: 9px; height: 10px; }
.x { width: 10px; height: 10px; }
.sidetabs { height: 25px; flex: none; display: flex; align-items: flex-start; margin-top: 2px; }
.sidetab { height: 21px; width: 171px; margin-top: 1px; display: flex; align-items: center; background: #eeeeee; border: 1px solid #c6c6c6; }
.sidetab span { flex: 1; text-align: center; padding-right: 8px; }
.sidetab.active { width: 177px; height: 25px; margin-top: 0; background: #fff; border: 1px solid #b0b0b0; border-bottom-color: #fff; padding-left: 1px; }
.tabic { width: 18px; height: 18px; margin-left: 4px; }
.tree { flex: 1; background: #fff; border: 1px solid #a0a0a0; padding: 1px 0 0 3px; }
.row { height: 18px; display: flex; align-items: center; }
.cn { width: 19px; height: 18px; flex: none; }
.ti { width: 16px; height: 18px; margin: 0 12px 0 2px; flex: none; }
.bd { width: 8px; height: 8px; margin-left: 2px; }
.sel { background: #f0f0f0; padding: 0 2px; margin-left: -2px; line-height: 18px; height: 18px; }
.row span { font-size: 11.100px; }

/* centre */
.center { flex: 1; min-width: 0; display: flex; flex-direction: column; }
.doctabs { height: 27px; flex: none; display: flex; align-items: flex-end; padding-left: 4px; background: linear-gradient(#f0f0f0, #fff 90%); position: relative; }
.doctab { height: 22px; line-height: 20px; padding: 0 10px; border-right: 1px solid #c8c8c8; white-space: nowrap; font-size: 11.500px; }
.doctab.t1 { width: 53px; }
.doctab.t2 { width: 123px; }
.doctab.t3 { width: 133px; padding-right: 0; border-right: 0; }
.doctab.active { width: 128px; height: 25px; line-height: 25px; font-weight: 700; padding: 0 0 0 4px; background: #f6f8fa; border: 1px solid #d6d6d6; border-bottom: 0; font-size: 11px; }
.docx { position: absolute; right: 6px; top: 8px; }
.docframe { height: 527px; flex: none; display: flex; flex-direction: column; border-top: 2px solid #808080; border-left: 1px solid #a8a8a8; background: #f0f0f0; }
.doctools { height: 29px; flex: none; display: flex; align-items: center; padding: 0 0 2px 5px; }
.doctools .grip { height: 22px; margin-right: 7px; }
.printic { margin-right: 6px; }
.sep2 { width: 1px; height: 21px; background: #a8a8a8; margin: 0 2px 0 0; flex: none; }
.zoomcombo { width: 68px; height: 22px; background: #fff; border: 1px solid #a9a9a9; display: flex; align-items: center; justify-content: space-between; padding: 0 5px 0 5px; margin: 0 3px 0 0; font-size: 10.900px; }
.eyeic { margin: 0 6px 0 3px; height: 12px; }
.layic { margin: 0 0 0 3px; }
.expic { margin-left: 1px; }
.docbody { flex: 1; display: flex; min-height: 0; }
.vtools { flex: none; display: flex; flex-direction: column; align-items: center; position: relative; padding-top: 11px; }
.vtools.left { width: 29px; padding-left: 4px; padding-right: 2px; }
.vtools.right { width: 29px; margin-left: 2px; border-left: 1px solid #e4e4e4; }
.hgrip { position: absolute; left: 3px; top: 3px; width: 23px; height: 2px; background: repeating-linear-gradient(90deg, #b0b0b0 0 2px, transparent 2px 4px); }
.vb { width: 23px; height: 22px; flex: none; display: flex; align-items: center; justify-content: center; }
.vb.selected { background: #cde6fb; box-shadow: inset 0 0 0 1px #5aa8e8; height: 21px; margin-top: 1px; }
.vb .drop { margin-left: 1px; }
.wide18 { width: 18px; }
.vsep { width: 21px; height: 1px; background: #a0a0a0; margin: 2px 0; flex: none; }
.canvas { width: 932px; height: 491px; flex: none; border-top: 1px solid #808080; border-left: 1px solid #808080; box-shadow: -1px 0 0 #a8a8a8; overflow: hidden; }
.diagram { width: 931px; height: 490px; }
.dtitle { font: 700 13.500px "Liberation Sans", sans-serif; fill: #000; }
.dlabel { font: 13.300px "Liberation Sans", sans-serif; fill: #111; }
.vscroll { width: 16px; height: 491px; flex: none; background: #f0f0f0; display: flex; flex-direction: column; align-items: center; }
.thumb { width: 15px; height: 211px; background: #cdcdcd; margin-top: 4px; }
.chevu, .chevd { width: 6px; height: 6px; border-left: 2px solid #606060; border-top: 2px solid #606060; transform: rotate(45deg); flex: none; }
.chevu { margin-top: 8px; }
.chevd { transform: rotate(225deg); margin-top: auto; margin-bottom: 6px; }

/* info */
.info { flex: 1; display: flex; flex-direction: column; margin-top: 5px; }
.infobody { display: flex; padding: 1px 0 0 4px; }
.qic { width: 15px; height: 17px; margin: 3px 18px 0 0; }
.infotext { line-height: 13px; font-size: 10.950px; }
.infotext p { margin: 0; white-space: nowrap; }
.infotext strong { display: block; line-height: 13px; }

/* status */
.statusbar { height: 19px; flex: none; display: flex; padding-left: 5px; margin-top: 1px; gap: 5px; align-items: stretch; border-bottom: 1px solid #fff; position: relative; }
.st { border-top: 1px solid #a0a0a0; border-left: 1px solid #a0a0a0; line-height: 16px; padding: 0 0 2px 8px; white-space: nowrap; display: flex; align-items: center; font-size: 11.200px; }
.st.main { width: 1100px; }
.st.lang { width: 45px; padding-left: 7px; font-size: 11.300px; }
.st.pos { width: 94px; padding-left: 2px; font-size: 11px; }
.st.size { width: 94px; padding-left: 1px; font-size: 11px; }
.sti { width: 14px; height: 14px; margin-right: 9px; }
.resize { width: 10px; height: 10px; position: absolute; right: 1px; bottom: 1px; }

/* peek of the window behind */
.peek { flex: 1; position: relative; background: #fdfdfd; border-left: 1px solid #e8e8e8; }
.pk { position: absolute; left: 0; width: 7px; }
.or1 { top: 5px; height: 16px; background: #f09020; }
.or2 { top: 27px; height: 23px; background: #f58400; }
.bl1 { top: 306px; height: 14px; width: 3px; background: #4c86c6; }
.or3 { top: 345px; height: 14px; width: 3px; background: #efb560; }
.bl2 { top: 402px; height: 5px; width: 2px; background: #5a90c8; }
.bl3 { top: 498px; height: 3px; width: 2px; background: #5a90c8; }

/* taskbar */
.taskbar { height: 9px; flex: 1; position: relative; background: linear-gradient(90deg, #7a7cb0 0, #8a88bb 700px, #8f8ab8 1000px, #6b72ac 1070px, #6468a8 1374px); overflow: hidden; }
.task { position: absolute; top: 0; height: 9px; background: rgba(255,255,255,.18); border: 1px solid rgba(255,255,255,.35); border-bottom: 0; }
.tb1 { left: 114px; width: 58px; } .tb2 { left: 176px; width: 58px; } .tb3 { left: 300px; width: 58px; } .tb4 { left: 362px; width: 50px; }
.tb5 { left: 423px; width: 55px; } .tb6 { left: 486px; width: 58px; } .tb7 { left: 548px; width: 58px; } .tb8 { left: 670px; width: 57px; }
.task.on { background: rgba(255,255,255,.5); border-color: #eee; }
.dot { position: absolute; top: 2px; left: 50%; margin-left: -10px; width: 20px; height: 12px; border-radius: 10px 10px 0 0; }
.yellow { background: #d8b870; width: 14px; left: 16px; margin-left: 0; top: 4px; }
.red { background: #d04040; width: 18px; margin-left: -9px; }
.wideish { width: 24px; margin-left: -22px; border-radius: 16px 0 0 0; }
.green { background: #08c008; width: 32px; margin-left: -16px; top: 1px; }
.blue { background: #8ab0d8; width: 16px; margin-left: -8px; left: 24px; }
.orange { background: #f08828; width: 30px; margin-left: -15px; border-radius: 0; top: 0; }
.multi { background: linear-gradient(90deg, #4070d0, #e04080 50%, #f0c020); top: 1px; width: 27px; margin-left: -14px; border-radius: 0; }
.trayspot { position: absolute; }
.startorb { left: 20px; top: 6px; width: 18px; height: 3px; background: #c4c8dc; }
.ie { left: 76px; top: 1px; width: 20px; height: 14px; border-radius: 50%; border: 2px solid #e8b030; background: #6aa0e0; }
.redfree { left: 258px; top: 3px; width: 18px; height: 14px; border-radius: 50%; background: #d04040; }
.streak { left: 1007px; top: 0; width: 56px; height: 9px; background: linear-gradient(155deg, transparent 25%, #3a2a6c 30%, #2a2a64 55%, transparent 62%); }
.purpleend { right: 0; top: 0; width: 8px; height: 9px; background: #8a58b8; }
```
